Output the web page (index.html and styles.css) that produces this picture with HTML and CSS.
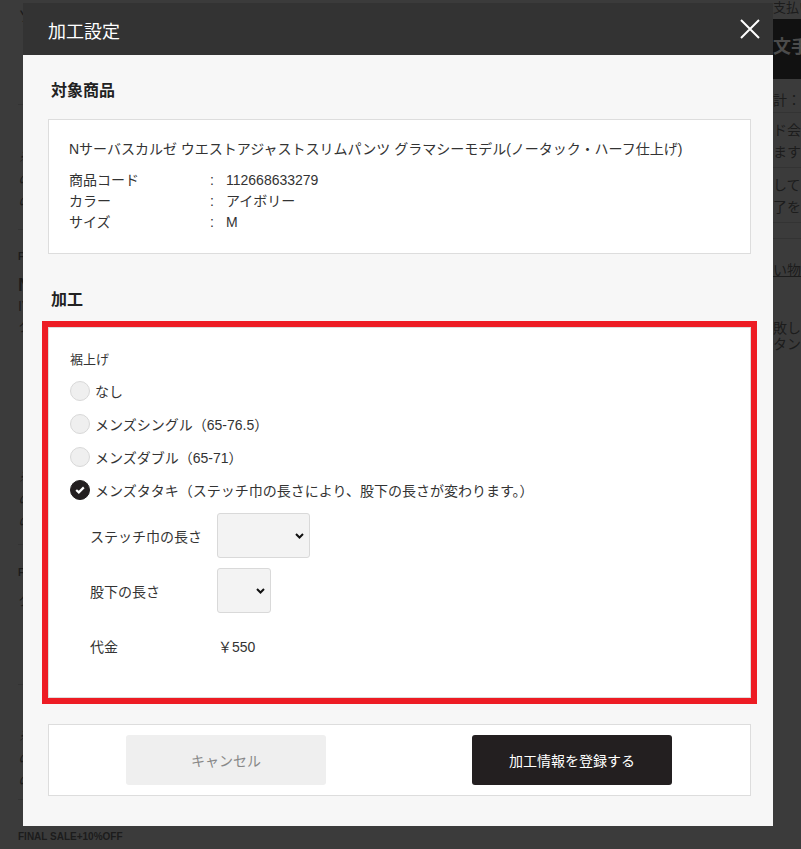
FILE: index.html
```html
<!DOCTYPE html>
<html lang="ja">
<head>
    <meta charset="UTF-8">
    <meta name="viewport" content="width=device-width, initial-scale=1.0">
    <title>加工設定</title>
    <link rel="stylesheet" href="styles.css">
</head>
<body>
<div class="page">
    <div class="page-main">
        <div class="bg-item bg-first">
            <p class="bg-head">ソフ</p>
        </div>
        <div class="bg-item bg-notes">
            <p>※加</p>
            <p>のし</p>
            <p>のし</p>
        </div>
        <div class="bg-item bg-product">
            <p class="bg-tag">FINAL</p>
            <p class="bg-title">N</p>
            <p class="bg-sub">IV</p>
            <p class="bg-sub">クー</p>
            <div class="bg-notes bg-notes-inner">
                <p>※加</p>
                <p>のし</p>
                <p>のし</p>
            </div>
        </div>
        <div class="bg-item bg-product-short">
            <p class="bg-tag">FINAL</p>
            <p class="bg-sub">クー</p>
        </div>
        <div class="bg-item bg-notes bg-notes-last">
            <p>※加</p>
            <p>のし</p>
            <p>のし</p>
        </div>
        <div class="bg-item bg-last">
            <p class="bg-tag">FINAL SALE+10%OFF</p>
        </div>
    </div>
    <div class="page-side">
        <p class="side-small">支払い</p>
        <div class="side-order">文手</div>
        <p class="side-row">計：</p>
        <p class="side-row side-two">ド会<br>ます</p>
        <p class="side-row side-two">して<br>了を</p>
        <p class="side-row side-empty"></p>
        <p class="side-link"><span>い物</span></p>
        <p class="side-foot">敗し<br>タン</p>
    </div>
</div>

<div class="modal">
    <div class="modal-head">
        <h1 class="modal-title">加工設定</h1>
        <button class="modal-close" type="button" aria-label="閉じる">
            <svg width="20" height="20" viewBox="0 0 20 20">
                <path d="M1 1 L19 19 M19 1 L1 19" stroke="#fff" stroke-width="2" fill="none"/>
            </svg>
        </button>
    </div>
    <div class="modal-body">
        <h2 class="section-title">対象商品</h2>
        <div class="box product">
            <p class="product-name">Nサーバスカルゼ ウエストアジャストスリムパンツ グラマシーモデル(ノータック・ハーフ仕上げ)</p>
            <dl class="product-spec">
                <dt>商品コード</dt>
                <dd>112668633279</dd>
                <dt>カラー</dt>
                <dd>アイボリー</dd>
                <dt>サイズ</dt>
                <dd>M</dd>
            </dl>
        </div>

        <h2 class="section-title section-title-gap">加工</h2>
        <div class="box option is-error">
            <p class="option-label">裾上げ</p>
            <ul class="radio-list">
                <li class="radio-item"><span class="radio"></span>なし</li>
                <li class="radio-item"><span class="radio"></span>メンズシングル（65-76.5）</li>
                <li class="radio-item"><span class="radio"></span>メンズダブル（65-71）</li>
                <li class="radio-item">
                    <span class="radio is-checked">
                        <svg width="10" height="8" viewBox="0 0 10 8">
                            <path d="M1.2 4 L3.8 6.4 L8.8 1.4" stroke="#fff" stroke-width="2.2" fill="none"/>
                        </svg>
                    </span>メンズタタキ（ステッチ巾の長さにより、股下の長さが変わります。）
                </li>
            </ul>
            <div class="field-row">
                <span class="field-label">ステッチ巾の長さ</span>
                <span class="select-wrap">
                    <select class="select select-wide"><option></option></select>
                    <svg class="select-arrow" width="9" height="6" viewBox="0 0 9 6">
                        <path d="M1 1 L4.5 4.5 L8 1" stroke="#111" stroke-width="2" fill="none"/>
                    </svg>
                </span>
            </div>
            <div class="field-row">
                <span class="field-label">股下の長さ</span>
                <span class="select-wrap">
                    <select class="select select-narrow"><option></option></select>
                    <svg class="select-arrow" width="9" height="6" viewBox="0 0 9 6">
                        <path d="M1 1 L4.5 4.5 L8 1" stroke="#111" stroke-width="2" fill="none"/>
                    </svg>
                </span>
            </div>
            <div class="field-row">
                <span class="field-label">代金</span>
                <span class="price">￥550</span>
            </div>
        </div>

        <div class="box actions">
            <button class="btn btn-cancel" type="button">キャンセル</button>
            <button class="btn btn-submit" type="button">加工情報を登録する</button>
        </div>
    </div>
</div>
</body>
</html>
```

FILE: styles.css
```css
* {
    box-sizing: border-box;
}

body {
    margin: 0;
    height: 849px;
    overflow: hidden;
    background-color: #3b3b3b;
    font-family: "Liberation Sans", "Noto Sans CJK JP", sans-serif;
    color: #333;
}

p {
    margin: 0;
}

/* dimmed page behind the modal */
.page {
    display: flex;
    height: 849px;
    color: #1c1c1c;
}

.page-main {
    width: 773px;
    padding-left: 18px;
}

.bg-item {
    border-bottom: 1px solid #333;
    font-size: 14px;
    line-height: 22px;
    white-space: nowrap;
}

.bg-first {
    height: 105px;
    padding-top: 6px;
}

.bg-head {
    font-size: 16px;
}

.bg-notes {
    height: 125px;
    padding-top: 41px;
    font-style: italic;
}

.bg-notes-inner {
    height: auto;
    padding-top: 130px;
}

.bg-product {
    height: 315px;
    padding-top: 20px;
}

.bg-tag {
    font-size: 10px;
    font-weight: bold;
    line-height: 14px;
}

.bg-title {
    margin-top: 10px;
    font-size: 18px;
    font-weight: bold;
}

.bg-sub {
    line-height: 20px;
}

.bg-product-short {
    height: 140px;
    padding-top: 21px;
}

.bg-product-short .bg-sub {
    margin-top: 10px;
}

.bg-notes-last {
    height: 115px;
    padding-top: 40px;
}

.bg-last {
    border-bottom: none;
    padding-top: 30px;
}

.page-side {
    flex: 1;
    font-size: 14px;
    line-height: 22px;
    white-space: nowrap;
    overflow: hidden;
}

.side-small {
    font-size: 13px;
    line-height: 16px;
}

.side-order {
    margin-top: 3px;
    height: 60px;
    line-height: 56px;
    background-color: #111;
    color: #4b4b4b;
    font-size: 18px;
    font-weight: bold;
}

.side-row {
    border-bottom: 1px solid #333;
    padding: 10px 0 1px;
}

.side-two {
    padding: 6px 0 4px;
}

.side-empty {
    height: 16px;
    padding: 0;
}

.side-link {
    padding-top: 20px;
}

.side-link span {
    text-decoration: underline;
}

.side-foot {
    margin-top: 39px;
    font-size: 14px;
    line-height: 16px;
}

/* modal */
.modal {
    position: absolute;
    top: 3px;
    left: 23px;
    width: 750px;
    height: 823px;
    background-color: #f7f7f7;
}

.modal-head {
    display: flex;
    align-items: center;
    justify-content: space-between;
    height: 52px;
    padding: 0 13px 0 25px;
    background-color: #333;
}

.modal-title {
    margin: 2px 0 0;
    color: #fff;
    font-size: 18px;
    font-weight: normal;
}

.modal-close {
    display: flex;
    padding: 0;
    border: none;
    background: none;
    cursor: pointer;
}

.modal-body {
    padding: 24px 22px 31px 25px;
}

.section-title {
    margin: 0 0 16px;
    padding-left: 3px;
    font-size: 16px;
    line-height: 24px;
    color: #222;
}

.section-title-gap {
    margin-top: 34px;
    margin-bottom: 15px;
}

.box {
    background-color: #fff;
    border: 1px solid #ddd;
}

.product {
    padding: 19px 20px 20px;
    font-size: 14px;
    line-height: 21px;
}

.product-name {
    margin-bottom: 10px;
}

.product-spec {
    display: grid;
    grid-template-columns: 141px auto;
    margin: 0;
}

.product-spec dd {
    margin: 0;
}

.product-spec dd::before {
    content: ":";
    display: inline-block;
    width: 16px;
}

/* processing option */
.option {
    height: 371px;
    padding: 22px 20px 0 21px;
    font-size: 14px;
}

.is-error {
    outline: 6px solid #ed1c24;
}

.option-label {
    font-size: 13px;
    line-height: 20px;
}

.radio-list {
    list-style: none;
    margin: 4px 0 0;
    padding: 0;
}

.radio-item {
    display: flex;
    align-items: center;
    height: 33px;
    gap: 5px;
}

.radio {
    display: flex;
    align-items: center;
    justify-content: center;
    width: 20px;
    height: 20px;
    border: 1px solid #d8d8d8;
    border-radius: 50%;
    background-color: #efefef;
}

.radio.is-checked {
    border-color: #231f20;
    background-color: #231f20;
}

.field-row {
    display: flex;
    align-items: center;
    height: 45px;
    margin-top: 10px;
    padding-left: 20px;
}

.radio-list + .field-row {
    margin-top: 7px;
}

.field-label {
    width: 127px;
}

.select-wrap {
    position: relative;
    display: flex;
}

.select {
    appearance: none;
    height: 45px;
    border: 1px solid #d9d9d9;
    border-radius: 3px;
    background-color: #f3f3f3;
}

.select-wide {
    width: 93px;
}

.select-narrow {
    width: 54px;
}

.select-arrow {
    position: absolute;
    right: 6px;
    top: 20px;
}

.price {
    padding-left: 1px;
}

/* buttons */
.actions {
    display: flex;
    gap: 146px;
    margin-top: 26px;
    padding: 10px 0 10px 77px;
}

.btn {
    width: 200px;
    height: 50px;
    border: none;
    border-radius: 3px;
    font-family: inherit;
    font-size: 14px;
    cursor: pointer;
}

.btn-cancel {
    background-color: #efefef;
    color: #888;
}

.btn-submit {
    background-color: #231f20;
    color: #fff;
}
```
